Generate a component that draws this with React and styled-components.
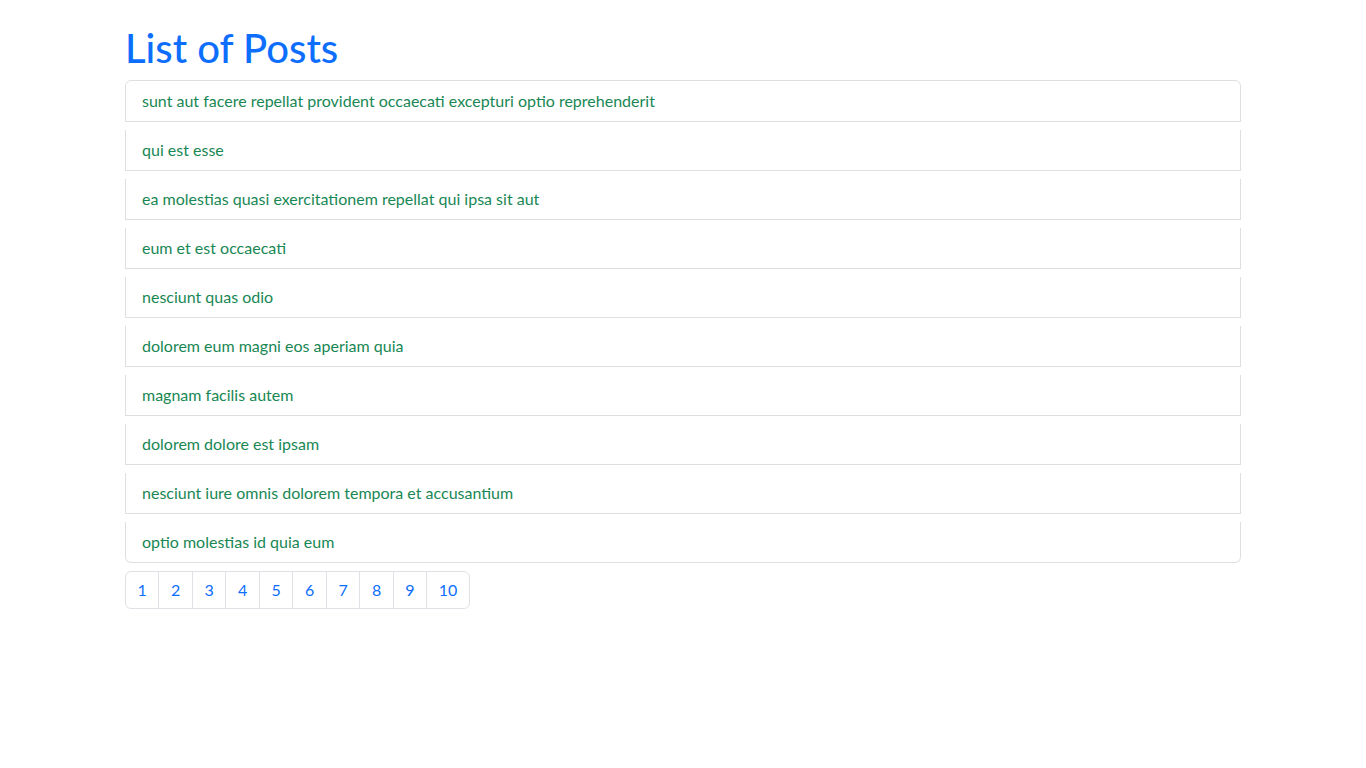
import React from "react";
import styled, { createGlobalStyle } from "styled-components";

const Global = createGlobalStyle`
  * { box-sizing: border-box; }
  body {
    margin: 0;
    font-family: Lato, "Noto Sans", sans-serif;
    font-size: 16px;
    line-height: 1.5;
    color: #212529;
    background: #fff;
  }
`;

const Container = styled.div`
  width: 1140px;
  margin: 0 auto;
  padding: 24px 12px 0;
`;

const Title = styled.h1`
  margin: 0 0 8px;
  font-size: 40px;
  font-weight: 500;
  line-height: 1.2;
  color: #0d6efd;
`;

const List = styled.ul`
  list-style: none;
  margin: 0;
  padding: 0;
  display: flex;
  flex-direction: column;
`;

const Item = styled.li`
  padding: 8px 16px;
  color: #198754;
  border: 1px solid rgba(0, 0, 0, 0.125);
  border-top-width: ${(p) => (p.$first ? "1px" : "0")};
  margin-bottom: 8px;
  border-top-left-radius: ${(p) => (p.$first ? "6px" : "0")};
  border-top-right-radius: ${(p) => (p.$first ? "6px" : "0")};
  border-bottom-left-radius: ${(p) => (p.$last ? "6px" : "0")};
  border-bottom-right-radius: ${(p) => (p.$last ? "6px" : "0")};
`;

const Pagination = styled.nav`
  display: flex;
`;

const PageLink = styled.a`
  display: block;
  padding: 6px 11.6px;
  color: #0d6efd;
  text-decoration: none;
  border: 1px solid #dee2e6;
  margin-left: ${(p) => (p.$first ? "0" : "-1px")};
  border-top-left-radius: ${(p) => (p.$first ? "6px" : "0")};
  border-bottom-left-radius: ${(p) => (p.$first ? "6px" : "0")};
  border-top-right-radius: ${(p) => (p.$last ? "6px" : "0")};
  border-bottom-right-radius: ${(p) => (p.$last ? "6px" : "0")};
  cursor: pointer;
`;

const posts = [
  "sunt aut facere repellat provident occaecati excepturi optio reprehenderit",
  "qui est esse",
  "ea molestias quasi exercitationem repellat qui ipsa sit aut",
  "eum et est occaecati",
  "nesciunt quas odio",
  "dolorem eum magni eos aperiam quia",
  "magnam facilis autem",
  "dolorem dolore est ipsam",
  "nesciunt iure omnis dolorem tempora et accusantium",
  "optio molestias id quia eum",
];

export default function App() {
  const pages = Array.from({ length: 10 }, (_, i) => i + 1);
  return (
    <>
      <Global />
      <Container>
        <Title>List of Posts</Title>
        <List>
          {posts.map((t, i) => (
            <Item key={i} $first={i === 0} $last={i === posts.length - 1}>
              {t}
            </Item>
          ))}
        </List>
        <Pagination>
          {pages.map((n, i) => (
            <PageLink key={n} $first={i === 0} $last={i === pages.length - 1}>
              {n}
            </PageLink>
          ))}
        </Pagination>
      </Container>
    </>
  );
}
